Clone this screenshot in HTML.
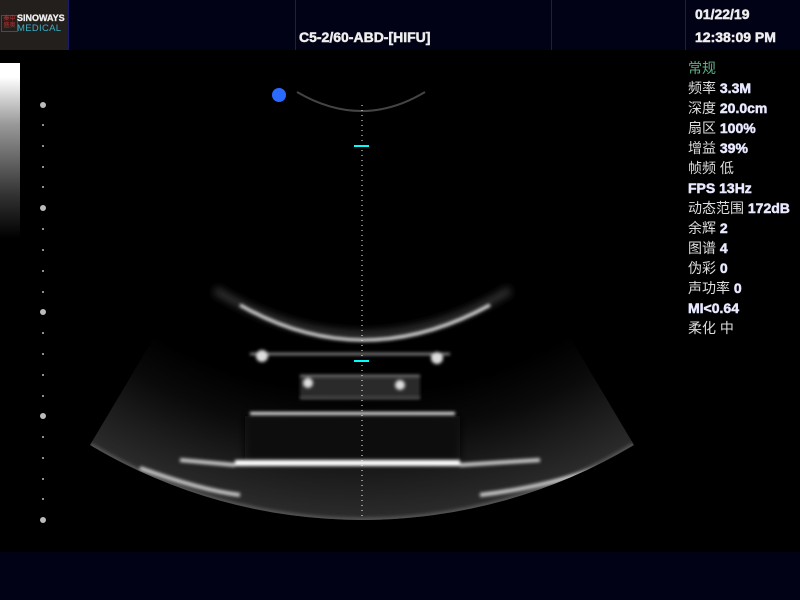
<!DOCTYPE html>
<html><head><meta charset="utf-8"><style>
html,body{margin:0;padding:0;background:#000;}
body{width:800px;height:600px;position:relative;overflow:hidden;font-family:"Liberation Sans","Noto Sans CJK SC",sans-serif;}
.hdr{position:absolute;left:0;top:0;width:800px;height:50px;background:#020216;}
.ftr{position:absolute;left:0;top:552px;width:800px;height:48px;background:#020216;}
.logo{position:absolute;left:0;top:0;width:68px;height:50px;background:#231f1c;}
.vl{position:absolute;top:0;width:1px;height:50px;background:#1a1a6a;}
.info{position:absolute;left:688px;top:58px;color:#ddd;font-size:14px;line-height:20px;white-space:nowrap;}
.info b{color:#e8e8ff;font-weight:700;font-family:"Liberation Sans",sans-serif;-webkit-text-stroke:0.5px #e8e8ff;}
.bt{font-weight:700;font-family:"Liberation Sans",sans-serif;-webkit-text-stroke:0.5px #eee;}
</style></head><body>
<div class="hdr"></div>
<div class="logo">
 <div style="position:absolute;left:1px;top:15px;width:15px;height:15px;border:1px solid #a22;color:#b33;font-size:6px;line-height:7px;text-align:center">秦中<br>盛奥</div>
 <div class="bt" style="position:absolute;left:17px;top:13px;color:#eee;font-size:9px;-webkit-text-stroke:0.3px #eee">SINOWAYS</div>
 <div style="position:absolute;left:17px;top:23px;color:#3ab0c8;font-size:9.5px;letter-spacing:0.3px">MEDICAL</div>
</div>
<div class="vl" style="left:68px"></div>
<div class="vl" style="left:295px"></div>
<div class="vl" style="left:551px"></div>
<div class="vl" style="left:685px"></div>
<div class="bt" style="position:absolute;left:299px;top:29px;color:#eee;font-size:14px">C5-2/60-ABD-[HIFU]</div>
<div class="bt" style="position:absolute;left:695px;top:3px;color:#eee;font-size:14px;line-height:23px">01/22/19<br>12:38:09 PM</div>
<div class="ftr"></div>
<div style="position:absolute;left:0;top:63px;width:20px;height:175px;background:linear-gradient(#fff 0%,#fff 8%,#999 35%,#333 75%,#000 100%)"></div>
<svg width="800" height="600" style="position:absolute;left:0;top:0">
<defs>
 <clipPath id="sec"><path d="M302 89 A116 116 0 0 1 422 89 L634 445 A531 531 0 0 1 90 445 Z"/></clipPath>
 <radialGradient id="rg" cx="362" cy="-11" r="531" gradientUnits="userSpaceOnUse">
  <stop offset="0.76" stop-color="#000"/><stop offset="0.84" stop-color="#0a0a0a"/><stop offset="0.92" stop-color="#1c1c1c"/><stop offset="1" stop-color="#2c2c2c"/>
 </radialGradient>
 <filter id="bl" filterUnits="userSpaceOnUse" x="0" y="0" width="800" height="600"><feGaussianBlur stdDeviation="1.5"/></filter>
 <filter id="bl2" filterUnits="userSpaceOnUse" x="0" y="0" width="800" height="600"><feGaussianBlur stdDeviation="4"/></filter>
</defs>
<g clip-path="url(#sec)">
 <rect x="0" y="0" width="800" height="600" fill="url(#rg)"/>
 <rect x="245" y="416" width="215" height="45" fill="#080808" filter="url(#bl2)"/>
 <rect x="300" y="377" width="120" height="21" fill="#2a2a2a" filter="url(#bl)"/>
 <path d="M90 445 A531 531 0 0 0 634 445" fill="none" stroke="#555" stroke-width="5" filter="url(#bl)"/>
 <path d="M140 468 Q200 490 240 495" stroke="#ccc" stroke-width="4" fill="none" filter="url(#bl)"/>
 <path d="M480 495 Q540 488 600 468" stroke="#ccc" stroke-width="4" fill="none" filter="url(#bl)"/>
</g>
<path d="M297 92 Q362 130 425 92" fill="none" stroke="#444" stroke-width="2"/>
<path d="M215 290 Q362 380 510 290" fill="none" stroke="#333" stroke-width="8" filter="url(#bl2)"/>
<path d="M240 305 Q362 375 490 305" fill="none" stroke="#eee" stroke-width="3" filter="url(#bl)"/>
<g filter="url(#bl)">
<rect x="250" y="353" width="200" height="2" fill="#aaa"/>
<circle cx="262" cy="356" r="6" fill="#ddd"/>
<circle cx="437" cy="358" r="6" fill="#ddd"/>
<rect x="300" y="375" width="120" height="2" fill="#999"/>
<circle cx="308" cy="383" r="5" fill="#ddd"/>
<circle cx="400" cy="385" r="5" fill="#ddd"/>
<rect x="300" y="397" width="120" height="2" fill="#666"/>
<rect x="250" y="412" width="205" height="3" fill="#eee"/>
<rect x="235" y="460" width="225" height="6" fill="#fff"/>
<path d="M180 460 L235 465 M460 465 L540 460" stroke="#ccc" stroke-width="4"/>
</g>
<line x1="362" y1="105" x2="362" y2="520" stroke="#fff" stroke-width="1" stroke-dasharray="1 4"/>
<rect x="354" y="145" width="15" height="2" fill="#0ff"/>
<rect x="354" y="360" width="15" height="2" fill="#0ff"/>
<circle cx="279" cy="95" r="7" fill="#2a6aff"/>
<g fill="#bbb">
 <circle cx="43" cy="105" r="3"/><circle cx="43" cy="208" r="3"/><circle cx="43" cy="312" r="3"/><circle cx="43" cy="416" r="3"/><circle cx="43" cy="520" r="3"/>
 <circle cx="43" cy="125" r="1"/><circle cx="43" cy="146" r="1"/><circle cx="43" cy="167" r="1"/><circle cx="43" cy="187" r="1"/>
 <circle cx="43" cy="229" r="1"/><circle cx="43" cy="250" r="1"/><circle cx="43" cy="271" r="1"/><circle cx="43" cy="292" r="1"/>
 <circle cx="43" cy="333" r="1"/><circle cx="43" cy="354" r="1"/><circle cx="43" cy="375" r="1"/><circle cx="43" cy="396" r="1"/>
 <circle cx="43" cy="437" r="1"/><circle cx="43" cy="458" r="1"/><circle cx="43" cy="479" r="1"/><circle cx="43" cy="499" r="1"/>
</g>
</svg>
<div class="info">
<span style="color:#5fb08a">常规</span><br>
频率 <b>3.3M</b><br>
深度 <b>20.0cm</b><br>
扇区 <b>100%</b><br>
增益 <b>39%</b><br>
帧频 低<br>
<b>FPS 13Hz</b><br>
动态范围 <b>172dB</b><br>
余辉 <b>2</b><br>
图谱 <b>4</b><br>
伪彩 <b>0</b><br>
声功率 <b>0</b><br>
<b>MI&lt;0.64</b><br>
柔化 中
</div>
</body></html>
